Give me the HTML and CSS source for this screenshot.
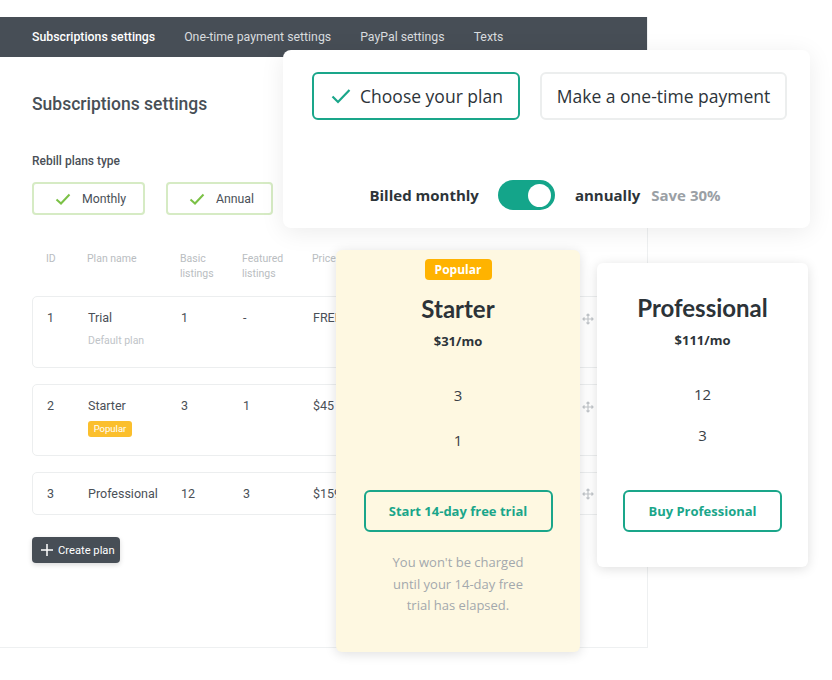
FILE: index.html
```html
<!DOCTYPE html>
<html lang="en">
<head>
  <meta charset="UTF-8" />
  <title>Subscriptions settings</title>
  <link rel="stylesheet" href="styles.css">
</head>
<body>

  <!-- Admin panel in the back -->
  <div class="admin">
    <div class="nav">
      <span class="nav-item active">Subscriptions settings</span>
      <span class="nav-item">One-time payment settings</span>
      <span class="nav-item">PayPal settings</span>
      <span class="nav-item">Texts</span>
    </div>

    <div class="content">
      <h1>Subscriptions settings</h1>
      <div class="label">Rebill plans type</div>
      <div class="type-options">
        <button class="type-btn monthly">
          <svg width="16" height="12" viewBox="0 0 16 12"><path d="M1.5 6.5l4.5 4 8.5-9" fill="none" stroke="#7bc146" stroke-width="2"/></svg>
          Monthly
        </button>
        <button class="type-btn annual">
          <svg width="16" height="12" viewBox="0 0 16 12"><path d="M1.5 6.5l4.5 4 8.5-9" fill="none" stroke="#7bc146" stroke-width="2"/></svg>
          Annual
        </button>
      </div>

      <div class="plans-head">
        <span>ID</span>
        <span>Plan name</span>
        <span>Basic<br>listings</span>
        <span>Featured<br>listings</span>
        <span>Price</span>
      </div>

      <div class="plan-row tall">
        <span>1</span>
        <span>Trial<small>Default plan</small></span>
        <span>1</span>
        <span>-</span>
        <span>FREE</span>
        <span class="drag">
          <svg width="12" height="12" viewBox="0 0 12 12"><path d="M6 1v10M1 6h10M4.5 2.5L6 1l1.5 1.5M4.5 9.5L6 11l1.5-1.5M2.5 4.5L1 6l1.5 1.5M9.5 4.5L11 6l-1.5 1.5" fill="none" stroke="#c2c6ca" stroke-width="1.2"/></svg>
        </span>
      </div>

      <div class="plan-row tall">
        <span>2</span>
        <span>Starter<em class="badge">Popular</em></span>
        <span>3</span>
        <span>1</span>
        <span>$45</span>
        <span class="drag">
          <svg width="12" height="12" viewBox="0 0 12 12"><path d="M6 1v10M1 6h10M4.5 2.5L6 1l1.5 1.5M4.5 9.5L6 11l1.5-1.5M2.5 4.5L1 6l1.5 1.5M9.5 4.5L11 6l-1.5 1.5" fill="none" stroke="#c2c6ca" stroke-width="1.2"/></svg>
        </span>
      </div>

      <div class="plan-row">
        <span>3</span>
        <span>Professional</span>
        <span>12</span>
        <span>3</span>
        <span>$159</span>
        <span class="drag">
          <svg width="12" height="12" viewBox="0 0 12 12"><path d="M6 1v10M1 6h10M4.5 2.5L6 1l1.5 1.5M4.5 9.5L6 11l1.5-1.5M2.5 4.5L1 6l1.5 1.5M9.5 4.5L11 6l-1.5 1.5" fill="none" stroke="#c2c6ca" stroke-width="1.2"/></svg>
        </span>
      </div>

      <button class="create-btn">
        <svg width="12" height="12" viewBox="0 0 12 12"><path d="M6 0v12M0 6h12" stroke="#fff" stroke-width="1.5"/></svg>
        Create plan
      </button>
    </div>
  </div>

  <!-- Plan switcher -->
  <div class="switcher">
    <div class="switch-tabs">
      <button class="switch-tab selected">
        <svg width="20" height="16" viewBox="0 0 20 16"><path d="M1.5 8.5l5.5 5.5 11.5-12" fill="none" stroke="#1aa68a" stroke-width="2.2"/></svg>
        Choose your plan
      </button>
      <button class="switch-tab">Make a one-time payment</button>
    </div>
    <div class="billing">
      <span>Billed monthly</span>
      <span class="toggle"><span class="knob"></span></span>
      <span>annually</span>
      <span class="save">Save 30%</span>
    </div>
  </div>

  <!-- Pricing cards -->
  <div class="card starter">
    <span class="card-badge">Popular</span>
    <h2>Starter</h2>
    <div class="price">$31/mo</div>
    <div class="features">
      <div>3</div>
      <div>1</div>
    </div>
    <button class="card-btn">Start 14-day free trial</button>
    <p class="note">You won't be charged<br>until your 14-day free<br>trial has elapsed.</p>
  </div>

  <div class="card professional">
    <h2>Professional</h2>
    <div class="price">$111/mo</div>
    <div class="features">
      <div>12</div>
      <div>3</div>
    </div>
    <button class="card-btn">Buy Professional</button>
  </div>

</body>
</html>
```

FILE: styles.css
```css
body {
  margin: 0;
  padding-top: 17px;
  width: 832px;
  height: 663px;
  overflow: hidden;
  position: relative;
  background: #fff;
  font-family: Roboto, 'Liberation Sans', sans-serif;
  color: #4a5057;
}

button {
  font-family: inherit;
  background: none;
  cursor: pointer;
}

/* Admin panel */
.admin {
  width: 647px;
  height: 630px;
  border-right: 1px solid #eef0f1;
  border-bottom: 1px solid #eef0f1;
}

.nav {
  height: 40px;
  background: #474e56;
  display: flex;
  align-items: center;
  gap: 29px;
  padding-left: 32px;
}

.nav-item {
  font-size: 12.3px;
  color: #d9dcdf;
}

.nav-item.active {
  color: #fff;
  font-weight: 500;
}

.content {
  padding: 36px 0 0 32px;
}

h1 {
  margin: 0;
  font-size: 17.5px;
  line-height: 22px;
  font-weight: 500;
  color: #484f56;
}

.label {
  margin-top: 38px;
  font-size: 12px;
  line-height: 16px;
  font-weight: 500;
  color: #4a5057;
}

.type-options {
  display: flex;
  gap: 21px;
  margin-top: 13px;
}

.type-btn {
  height: 33px;
  border: 2px solid #d6ebc4;
  border-radius: 4px;
  display: flex;
  align-items: center;
  justify-content: center;
  gap: 11px;
  font-size: 12.3px;
  color: #4a5057;
  padding: 0 0 0 4px;
}

.type-btn.monthly { width: 113px; }
.type-btn.annual { width: 107px; }

.plans-head,
.plan-row {
  display: grid;
  grid-template-columns: 41px 93px 62px 70px 269px 1fr;
  padding-left: 14px;
  width: 569px;
}

.plans-head {
  margin-top: 36px;
  font-size: 10.5px;
  line-height: 15px;
  color: #b9bdc1;
}

.plan-row {
  box-sizing: border-box;
  width: 583px;
  height: 43px;
  margin-top: 16px;
  border: 1px solid #eceeef;
  border-radius: 5px;
  align-items: center;
  font-size: 12.5px;
}

.plans-head + .plan-row {
  margin-top: 15px;
}

.plan-row.tall {
  height: 72px;
  align-items: start;
  padding-top: 13px;
}

.plan-row small {
  display: block;
  margin-top: 9px;
  font-size: 10.5px;
  color: #c0c4c8;
}

.badge {
  display: block;
  width: 44px;
  margin-top: 8px;
  font-style: normal;
  font-size: 9.5px;
  line-height: 16px;
  text-align: center;
  color: #fff;
  background: #fbbf2d;
  border-radius: 3px;
}

.drag {
  display: flex;
  align-items: center;
}

.plan-row.tall .drag {
  padding-top: 3px;
}

.create-btn {
  margin-top: 22px;
  height: 26px;
  width: 88px;
  border: none;
  border-radius: 4px;
  background: #474e56;
  color: #fff;
  font-size: 11.2px;
  display: flex;
  align-items: center;
  gap: 5px;
  padding: 0 0 0 9px;
  box-shadow: 0 2px 5px rgba(0, 0, 0, 0.15);
}

/* Switcher card */
.switcher {
  position: absolute;
  left: 283px;
  top: 50px;
  width: 527px;
  height: 178px;
  box-sizing: border-box;
  padding: 22px 0 0 29px;
  background: #fff;
  border-radius: 8px;
  box-shadow: 0 4px 24px rgba(0, 0, 0, 0.08);
  font-family: 'Open Sans', sans-serif;
}

.switch-tabs {
  display: flex;
  gap: 20px;
}

.switch-tab {
  height: 48px;
  box-sizing: border-box;
  border: 2px solid #eceeee;
  border-radius: 6px;
  font-size: 17.5px;
  color: #2d3439;
  display: flex;
  align-items: center;
  justify-content: center;
  width: 247px;
}

.switch-tab.selected {
  width: 208px;
  border-color: #1aa68a;
  gap: 9px;
  padding-right: 4px;
}

.billing {
  display: flex;
  align-items: center;
  justify-content: center;
  margin: 60px 0 0 -32px;
  font-size: 15px;
  font-weight: 700;
  color: #2d3439;
}

.toggle {
  width: 57px;
  height: 30px;
  margin: 0 20px 0 19px;
  border-radius: 15px;
  background: #14a58a;
  display: flex;
  align-items: center;
  justify-content: flex-end;
  padding-right: 4px;
  box-sizing: border-box;
}

.knob {
  width: 23px;
  height: 23px;
  border-radius: 50%;
  background: #fff;
}

.save {
  margin-left: 11px;
  color: #9aa0a5;
}

/* Pricing cards */
.card {
  position: absolute;
  box-sizing: border-box;
  display: flex;
  flex-direction: column;
  align-items: center;
  border-radius: 6px;
  box-shadow: 0 2px 12px rgba(0, 0, 0, 0.13);
  font-family: 'Open Sans', sans-serif;
  color: #2d3439;
}

.card.starter {
  left: 336px;
  top: 250px;
  width: 244px;
  height: 402px;
  padding-top: 9px;
  background: #fef8e1;
}

.card.professional {
  left: 597px;
  top: 263px;
  width: 211px;
  height: 304px;
  padding-top: 30px;
  background: #fff;
}

.card-badge {
  height: 21px;
  width: 67px;
  border-radius: 4px;
  background: #ffb300;
  color: #fff;
  font-size: 12px;
  font-weight: 700;
  line-height: 21px;
  text-align: center;
  margin-bottom: 14px;
}

.card h2 {
  margin: 0;
  font-family: Lato, 'Open Sans', sans-serif;
  font-size: 24px;
  line-height: 30px;
  font-weight: 700;
  color: #2c3338;
}

.price {
  margin-top: 8px;
  font-size: 13px;
  line-height: 18px;
  font-weight: 700;
}

.features {
  margin-top: 35px;
  display: flex;
  flex-direction: column;
  align-items: center;
  gap: 25px;
  font-size: 15px;
  line-height: 20px;
  color: #3a4046;
}

.professional .features {
  gap: 21px;
}

.card-btn {
  margin-top: 40px;
  height: 42px;
  width: 189px;
  border: 2px solid #1aa68a;
  border-radius: 6px;
  color: #1aa68a;
  font-family: 'Open Sans', sans-serif;
  font-size: 13px;
  font-weight: 700;
}

.professional .card-btn {
  width: 159px;
  margin-top: 45px;
}

.note {
  margin: 20px 0 0;
  font-size: 13px;
  line-height: 21.5px;
  text-align: center;
  color: #a3a8ad;
}
```
